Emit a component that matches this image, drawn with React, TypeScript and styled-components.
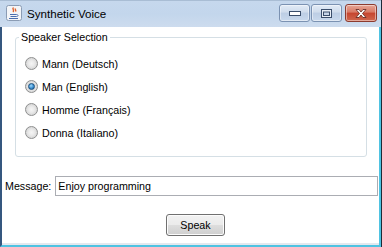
import React, { useState } from 'react';
import styled, { createGlobalStyle } from 'styled-components';

const GlobalStyle = createGlobalStyle`
  html, body {
    margin: 0;
    padding: 0;
    background: #fff;
  }
  body {
    width: 382px;
    height: 247px;
    overflow: hidden;
  }
`;

const Window = styled.div`
  width: 382px;
  height: 247px;
  display: flex;
  flex-direction: column;
  box-sizing: border-box;
  border-right: 1px solid #1d2a38;
  font-family: 'Liberation Sans', Arial, sans-serif;
  color: #000;
`;

const TitleBar = styled.div`
  height: 27px;
  flex: none;
  display: flex;
  align-items: flex-start;
  padding-right: 4px;
  border-top: 1px solid #a9bdd4;
  box-sizing: border-box;
  background: linear-gradient(to bottom, #c6d8ed 0%, #c3d6ec 50%, #cddcee 100%);
`;

const AppIcon = styled.svg`
  margin: 4px 0 0 6px;
  flex: none;
`;

const Caption = styled.span`
  margin-left: 5px;
  font-size: 11.6px;
  line-height: 26px;
  color: #000;
`;

const Spacer = styled.div`
  flex: 1;
`;

const CaptionButtons = styled.div`
  display: flex;
  margin-top: 3px;
`;

const CaptionButton = styled.div<{ $close?: boolean; $gap?: number }>`
  width: ${({ $close }) => ($close ? '32px' : '31px')};
  height: 18px;
  margin-left: ${({ $gap }) => $gap ?? 0}px;
  box-sizing: border-box;
  border: 1px solid ${({ $close }) => ($close ? '#8c3b2f' : '#7b92b2')};
  border-radius: 3px;
  display: flex;
  align-items: center;
  justify-content: center;
  box-shadow: inset 0 0 0 1px rgba(255, 255, 255, 0.45);
  background: ${({ $close }) =>
    $close
      ? 'linear-gradient(to bottom, #e6a595 0%, #d87a66 45%, #c6452f 50%, #d0684f 100%)'
      : 'linear-gradient(to bottom, #e2ebf6 0%, #cfdcec 45%, #bccde4 50%, #c9d9ed 100%)'};
`;

const Client = styled.div`
  flex: 1;
  display: flex;
  flex-direction: column;
  background: #fff;
  border-left: 2px solid #35577f;
  border-right: 2px solid #4fc3e2;
  border-bottom: 2px solid #4fc3e2;
  box-shadow: inset 0 -2px 0 #e3e9ef;
  font-size: 10.7px;
`;

const Group = styled.fieldset`
  margin: 4px 12px 0 13px;
  padding: 0 0 0 3px;
  border: 1px solid #d5dfe5;
  border-radius: 3px;
  min-width: 0;
`;

const GroupTitle = styled.legend`
  padding: 0 2px;
  line-height: 12px;
  font-size: 10.7px;
`;

const RadioList = styled.div`
  display: flex;
  flex-direction: column;
  padding: 9px 0 12px 6px;
`;

const RadioRow = styled.label`
  height: 23px;
  display: flex;
  align-items: center;
  gap: 4px;
  cursor: default;
`;

const RadioCircle = styled.span<{ $checked: boolean }>`
  width: 13px;
  height: 13px;
  box-sizing: border-box;
  border-radius: 50%;
  border: 1px solid #8e8f8f;
  display: flex;
  align-items: center;
  justify-content: center;
  background: radial-gradient(circle at 50% 50%, #f5f5f5 0%, #ebebeb 35%, #d6d6d6 75%, #e8e8e8 100%);
  &::after {
    content: '';
    display: ${({ $checked }) => ($checked ? 'block' : 'none')};
    width: 5px;
    height: 5px;
    border-radius: 50%;
    border: 1px solid #1c4f7c;
    background: radial-gradient(circle at 40% 35%, #9fd8fa 0%, #3a8ed0 55%, #1b5b93 100%);
  }
`;

const MessageRow = styled.div`
  display: flex;
  align-items: center;
  gap: 4px;
  margin: 19px 1px 0 3px;
`;

const MessageInput = styled.input`
  flex: 1;
  min-width: 0;
  height: 20px;
  box-sizing: border-box;
  border: 1px solid #abadb3;
  padding: 0 2px;
  font-family: 'Liberation Sans', Arial, sans-serif;
  font-size: 10.7px;
  color: #000;
  outline: none;
`;

const ButtonRow = styled.div`
  display: flex;
  justify-content: center;
  padding-left: 10px;
  margin-top: 18px;
`;

const SpeakButton = styled.button`
  width: 59px;
  height: 22px;
  box-sizing: border-box;
  border: 1px solid #707070;
  border-radius: 3px;
  background: linear-gradient(to bottom, #f2f2f2 0%, #ebebeb 48%, #dddddd 52%, #cfcfcf 100%);
  box-shadow: inset 0 0 0 1px #fcfcfc;
  font-family: 'Liberation Sans', Arial, sans-serif;
  font-size: 10.7px;
  color: #000;
  padding: 0;
`;

const speakers = ['Mann (Deutsch)', 'Man (English)', 'Homme (Français)', 'Donna (Italiano)'];

const App: React.FC = () => {
  const [selected, setSelected] = useState('Man (English)');
  const [message, setMessage] = useState('Enjoy programming');

  return (
    <>
      <GlobalStyle />
      <Window>
        <TitleBar>
          <AppIcon width="16" height="16" viewBox="0 0 16 16">
            <rect x="0.5" y="0.5" width="15" height="15" rx="2" fill="#f3f5f8" stroke="#8b9cb4" />
            <path d="M7.5 2.5c-2 1.5 1.5 2.5-.5 4.5M9.5 3.5c-1 1 1 1.5 0 3" stroke="#e0622c" strokeWidth="1.4" fill="none" />
            <path d="M4 9.5h6.5M4.5 11.5h6M3 13.5h9" stroke="#4b6fb0" strokeWidth="1.1" />
            <path d="M10.5 9.5c2 0 2 2 0 2" stroke="#4b6fb0" strokeWidth="1" fill="none" />
          </AppIcon>
          <Caption>Synthetic Voice</Caption>
          <Spacer />
          <CaptionButtons>
            <CaptionButton>
              <svg width="12" height="6" viewBox="0 0 12 6">
                <rect x="0.5" y="1.5" width="11" height="4" fill="#fff" stroke="#3a4e6b" />
              </svg>
            </CaptionButton>
            <CaptionButton $gap={1}>
              <svg width="11" height="9" viewBox="0 0 11 9">
                <rect x="0.5" y="0.5" width="10" height="8" fill="#e8eef6" stroke="#3a4e6b" />
                <rect x="2.5" y="3" width="6" height="3.5" fill="#c7d5e8" stroke="#3a4e6b" />
              </svg>
            </CaptionButton>
            <CaptionButton $close $gap={3}>
              <svg width="14" height="11" viewBox="0 0 14 11">
                <path d="M2 1.5h3l2 2.5 2-2.5h3l-3.5 4 3.5 4h-3l-2-2.5-2 2.5h-3l3.5-4z" fill="#fff" stroke="#5a2018" strokeWidth="0.8" />
              </svg>
            </CaptionButton>
          </CaptionButtons>
        </TitleBar>
        <Client>
          <Group>
            <GroupTitle>Speaker Selection</GroupTitle>
            <RadioList>
              {speakers.map((s) => (
                <RadioRow key={s} onClick={() => setSelected(s)}>
                  <RadioCircle $checked={selected === s} />
                  {s}
                </RadioRow>
              ))}
            </RadioList>
          </Group>
          <MessageRow>
            <span>Message:</span>
            <MessageInput value={message} onChange={(e) => setMessage(e.target.value)} />
          </MessageRow>
          <ButtonRow>
            <SpeakButton>Speak</SpeakButton>
          </ButtonRow>
        </Client>
      </Window>
    </>
  );
};

export default App;
